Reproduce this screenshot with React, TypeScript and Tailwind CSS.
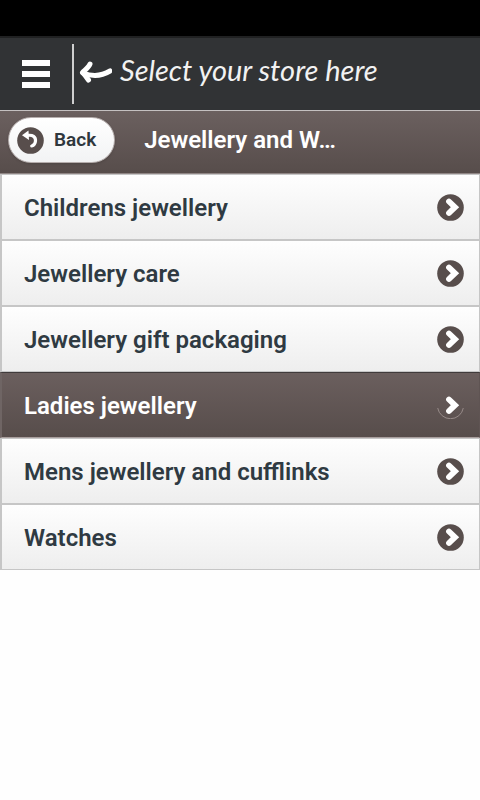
import { useState } from 'react';
import { clsx } from 'clsx';

const CATEGORIES = [
  'Childrens jewellery',
  'Jewellery care',
  'Jewellery gift packaging',
  'Ladies jewellery',
  'Mens jewellery and cufflinks',
  'Watches',
];

export default function App() {
  const [active, setActive] = useState('Ladies jewellery');

  return (
    <div className="min-h-screen bg-[#fefefe] font-['Roboto',sans-serif]">
      {/* Status bar */}
      <div className="h-9 bg-black" />

      <StoreBar />

      <header className="relative h-16 border-t border-b border-t-[#c4c0c0] border-b-[#8f8584] bg-linear-to-b from-[#6b605f] to-[#574d4b]">
        <button
          type="button"
          className="absolute top-1.5 left-2 flex h-[46px] items-center gap-2.5 rounded-full border border-[#b5adac] bg-linear-to-b from-white to-[#f2f3f4] pr-[18px] pl-2 text-[19px] font-semibold text-[#2f373d] shadow-sm"
        >
          <BackIcon />
          Back
        </button>
        <h1 className="pt-[13px] text-center text-2xl leading-8 font-semibold whitespace-nowrap text-white">
          Jewellery and W…
        </h1>
      </header>

      <ul>
        {CATEGORIES.map((name) => (
          <CategoryRow
            key={name}
            name={name}
            active={name === active}
            onSelect={() => setActive(name)}
          />
        ))}
      </ul>
    </div>
  );
}

function StoreBar() {
  return (
    <div className="flex h-[74px] items-center border-t-2 border-[#202122] bg-[#313335]">
      <button type="button" aria-label="Menu" className="flex h-15 w-[72px] items-center justify-center">
        <svg viewBox="0 0 28 30" className="h-[30px] w-7" fill="#fff">
          <rect y="1" width="28" height="6" />
          <rect y="12" width="28" height="6" />
          <rect y="23" width="28" height="6" />
        </svg>
      </button>
      <a
        href="#stores"
        className="flex h-15 flex-1 items-center gap-2 border-l-2 border-[#cfcfcf] pb-1 pl-1 font-['Lato',cursive] text-[29px] whitespace-nowrap text-[#f2f2f2] italic"
      >
        <svg
          viewBox="0 0 34 22"
          className="h-[22px] w-[34px]"
          fill="none"
          stroke="#fff"
          strokeLinecap="round"
          strokeLinejoin="round"
        >
          <path d="M12 3C10.500 6.500 7 9 4.500 11.500c2 2 4 4.500 6 7.500" strokeWidth="5" />
          <path d="M5 12c9 3.500 18 3.500 27-2" strokeWidth="5" />
        </svg>
        <span className="pb-1">Select your store here</span>
      </a>
    </div>
  );
}

function CategoryRow({
  name,
  active,
  onSelect,
}: {
  name: string;
  active: boolean;
  onSelect: () => void;
}) {
  return (
    <li>
      <button
        type="button"
        onClick={onSelect}
        aria-pressed={active}
        className={clsx(
          'flex h-[66px] w-full items-center justify-between border border-l-2 bg-linear-to-b pr-[15px] pl-[22px] text-left text-2xl font-semibold',
          active
            ? 'border-t-[#403b3b] border-r-[#5f5453] border-b-[#a89e9d] border-l-[#6f6564] from-[#6b5f5e] to-[#574d4b] text-white'
            : 'border-[#c6c6c6] from-[#fefefe] to-[#eeeeee] text-[#2f3a42]',
        )}
      >
        <span className="pt-0.5">{name}</span>
        <ChevronBadge active={active} />
      </button>
    </li>
  );
}

function ChevronBadge({ active }: { active: boolean }) {
  return (
    <svg viewBox="0 0 27 27" className="size-[27px]" fill="none">
      {active ? (
        <path d="M.7 16a13 13 0 0 0 25.600 0" stroke="#978b89" strokeWidth="1" />
      ) : (
        <circle cx="13.500" cy="13.500" r="13.300" fill="#584e4c" />
      )}
      <path d="M12 7.500l6 5.700-6 5.800" stroke="#fff" strokeWidth="5.800" strokeLinecap="round" />
    </svg>
  );
}

function BackIcon() {
  return (
    <svg viewBox="0 0 27 27" className="size-[27px]" fill="none">
      <circle cx="13.500" cy="13.500" r="13.300" fill="#584e4c" />
      <path d="M5 8.200L11.500 3.500l.5 9.500z" fill="#fff" />
      <path d="M10 8.500c6-1 8.800 1.500 8.500 5.500-.2 2.500-1.500 4.500-3.800 5" stroke="#fff" strokeWidth="3.200" strokeLinecap="round" />
    </svg>
  );
}
